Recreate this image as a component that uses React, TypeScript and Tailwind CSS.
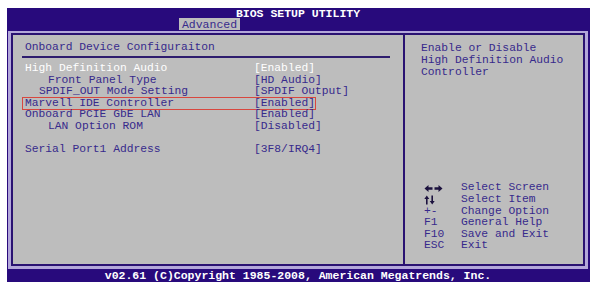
const rows = [
  { label: 'High Definition Audio', value: '[Enabled]', indent: '', active: true },
  { label: 'Front Panel Type', value: '[HD Audio]', indent: 'pl-[23px]' },
  { label: 'SPDIF_OUT Mode Setting', value: '[SPDIF Output]', indent: 'pl-[14px]' },
  { label: 'Marvell IDE Controller', value: '[Enabled]', indent: '', boxed: true },
  { label: 'Onboard PCIE GbE LAN', value: '[Enabled]', indent: '' },
  { label: 'LAN Option ROM', value: '[Disabled]', indent: 'pl-[23px]' },
  { label: '', value: '', indent: '' },
  { label: 'Serial Port1 Address', value: '[3F8/IRQ4]', indent: '' },
];

function LeftRight() {
  return (
    <svg width="19" height="9" viewBox="0 0 19 9" className="text-[#1c123e]">
      <path d="M0.5 4.5 L4.5 1 L4.5 3.3 L8.5 3.3 L8.5 5.7 L4.5 5.7 L4.5 8 Z" fill="currentColor" />
      <path d="M18.5 4.5 L14.5 1 L14.5 3.3 L10.5 3.3 L10.5 5.7 L14.5 5.7 L14.5 8 Z" fill="currentColor" />
    </svg>
  );
}

function UpDown() {
  return (
    <svg width="11" height="10" viewBox="0 0 11 10" className="text-[#1c123e]">
      <path d="M2.8 0.5 L0.3 4 L2 4 L2 9.5 L3.6 9.5 L3.6 4 L5.3 4 Z" fill="currentColor" />
      <path d="M8.2 9.5 L5.7 6 L7.4 6 L7.4 0.5 L9 0.5 L9 6 L10.7 6 Z" fill="currentColor" />
    </svg>
  );
}

const keys = [
  { key: <LeftRight />, text: 'Select Screen' },
  { key: <UpDown />, text: 'Select Item' },
  { key: '+-', text: 'Change Option' },
  { key: 'F1', text: 'General Help' },
  { key: 'F10', text: 'Save and Exit' },
  { key: 'ESC', text: 'Exit' },
];

export default function App() {
  return (
    <div className="w-[600px] h-[288px] bg-white pl-[7px] pt-[8px] font-['Liberation_Mono',monospace]">
      <div className="w-[583px] h-[274px] bg-[#280a7c] flex flex-col pl-[1px] pr-[2px]">
        {/* Header */}
        <div className="h-[23px] flex flex-col">
          <div className="h-[10px] leading-[12px] text-center text-[11.5px] font-bold text-white">
            BIOS SETUP UTILITY
          </div>
          <div className="flex pl-[171px]">
            <div className="h-[12px] w-[61px] bg-[#bdbdbd] text-[#372a8c] text-[11.5px] leading-[13px] text-center">
              Advanced
            </div>
          </div>
        </div>

        {/* Body */}
        <div className="bg-[#b3a7da] px-[3px] pt-[2px] pb-[3px]">
          <div className="h-[233px] border-2 border-[#2a1272] bg-[#bdbdbd] flex text-[11.3px] text-[#372a8c]">
            {/* Left panel */}
            <div className="w-[390px] flex flex-col">
              <div className="mt-[6px] pl-[12px] h-[12px] leading-[12px]">Onboard Device Configuraiton</div>
              <div className="mt-[3px] ml-[9px] w-[368px] h-[2px] bg-[#2e1d6e]" />
              <div className="mt-[4px] pl-[12px]">
                {rows.map((r, i) => (
                  <div
                    key={i}
                    className={`relative grid grid-cols-[229px_1fr] h-[11.6px] leading-[12.5px] ${r.active ? 'text-white' : ''}`}
                  >
                    <div className={r.indent}>{r.label}</div>
                    <div>{r.value}</div>
                    {r.boxed && (
                      <div className="absolute left-[-3px] top-0 w-[294px] h-[13px] border border-[#d8473e]" />
                    )}
                  </div>
                ))}
              </div>
            </div>

            {/* Divider */}
            <div className="w-[2px] bg-[#2a1272]" />

            {/* Right panel */}
            <div className="flex-1 flex flex-col pl-[16px]">
              <div className="mt-[7px] leading-[12px]">
                <div>Enable or Disable</div>
                <div>High Definition Audio</div>
                <div>Controller</div>
              </div>
              <div className="mt-auto mb-[12px] ml-[3px]">
                {keys.map((k, i) => (
                  <div key={i} className="grid grid-cols-[37px_1fr] h-[11.6px] leading-[11.6px] items-center">
                    <div className="flex items-center">{k.key}</div>
                    <div>{k.text}</div>
                  </div>
                ))}
              </div>
            </div>
          </div>
        </div>

        {/* Footer */}
        <div className="h-[13px] leading-[13px] text-center text-[11.5px] font-bold text-white">
          v02.61 (C)Copyright 1985-2008, American Megatrends, Inc.
        </div>
      </div>
    </div>
  );
}
